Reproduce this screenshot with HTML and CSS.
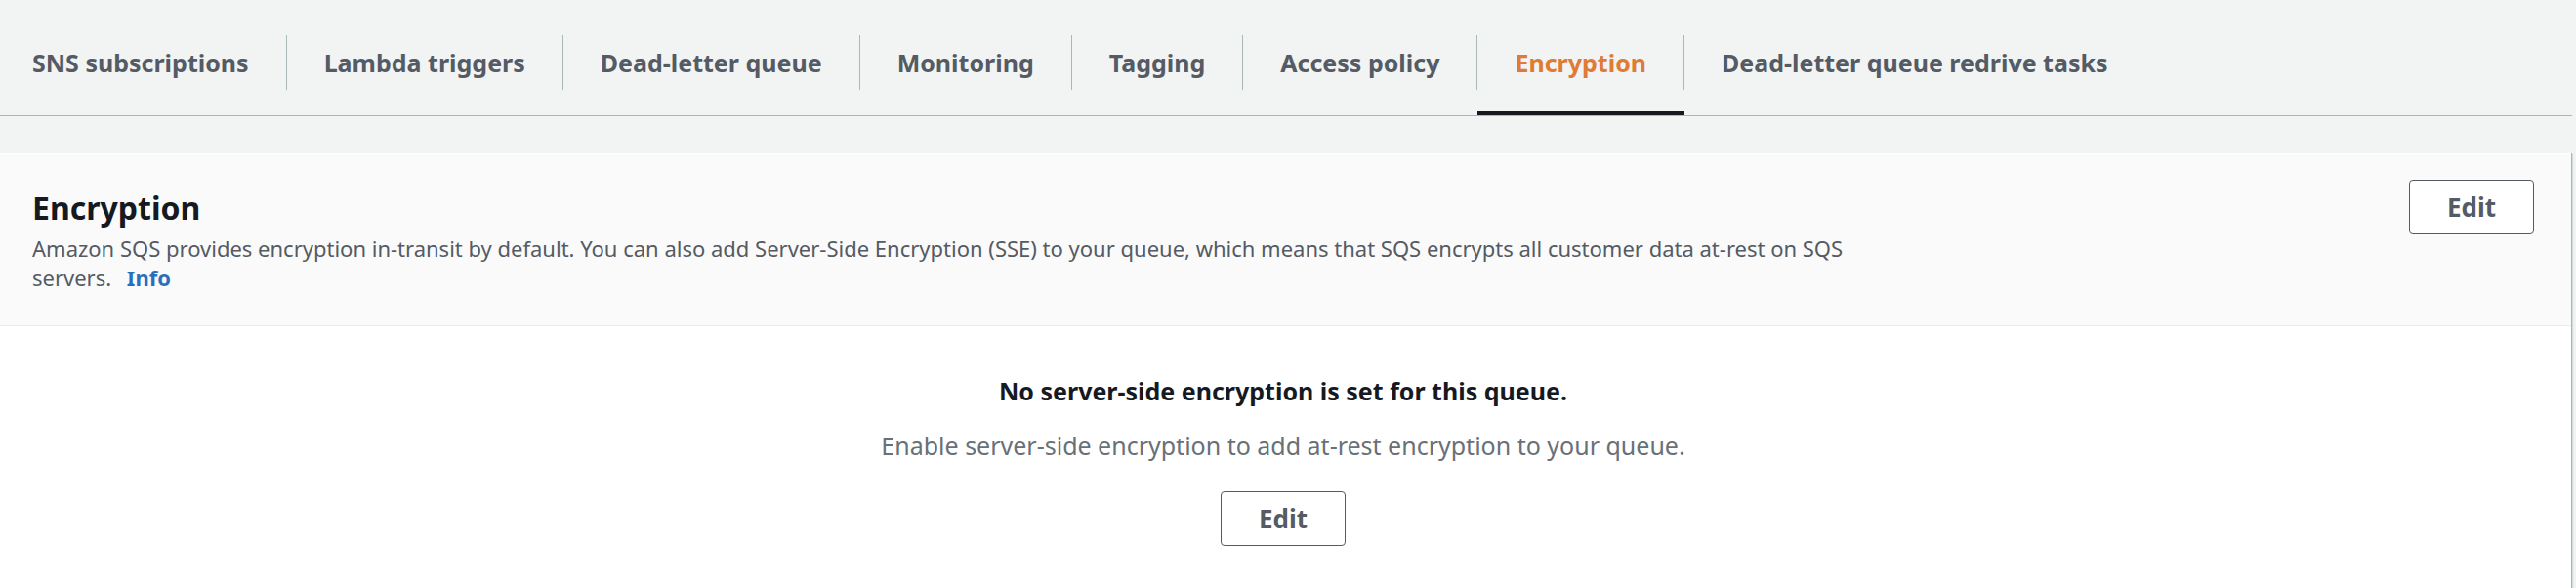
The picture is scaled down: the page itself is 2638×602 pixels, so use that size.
FILE: index.html
```html
<!DOCTYPE html>
<html lang="en">
<head>
<meta charset="utf-8">
<title>Encryption</title>
<link rel="stylesheet" href="styles.css">
</head>
<body>
<nav class="tabs" aria-label="Queue details">
  <ul class="tab-list">
    <li class="tab"><a class="tab-link" href="#sns">SNS subscriptions</a></li>
    <li class="tab"><a class="tab-link" href="#lambda">Lambda triggers</a></li>
    <li class="tab"><a class="tab-link" href="#dlq">Dead-letter queue</a></li>
    <li class="tab"><a class="tab-link" href="#monitoring">Monitoring</a></li>
    <li class="tab"><a class="tab-link" href="#tagging">Tagging</a></li>
    <li class="tab"><a class="tab-link" href="#policy">Access policy</a></li>
    <li class="tab tab-active"><a class="tab-link" href="#encryption" aria-current="page">Encryption</a></li>
    <li class="tab"><a class="tab-link" href="#redrive">Dead-letter queue redrive tasks</a></li>
  </ul>
</nav>
<main class="panel" id="encryption">
  <header class="panel-header">
    <div class="panel-intro">
      <h2 class="panel-title">Encryption</h2>
      <p class="panel-description">Amazon SQS provides encryption in-transit by default. You can also add Server-Side Encryption (SSE) to your queue, which means that SQS encrypts all customer data at-rest on SQS servers. <a class="info-link" href="#info">Info</a></p>
    </div>
    <button class="button" type="button">Edit</button>
  </header>
  <section class="empty-state">
    <h3 class="empty-title">No server-side encryption is set for this queue.</h3>
    <p class="empty-text">Enable server-side encryption to add at-rest encryption to your queue.</p>
    <button class="button" type="button">Edit</button>
  </section>
</main>
</body>
</html>
```
FILE: styles.css
```css
* {
  box-sizing: border-box;
}

body {
  display: flex;
  flex-direction: column;
  min-height: 100vh;
  margin: 0;
  padding-right: 4px;
  background: #f2f3f3;
  color: #16191f;
  font-family: "Noto Sans", "Open Sans", sans-serif;
}

h2,
h3,
p,
ul {
  margin: 0;
  padding: 0;
}

.tabs {
  margin-bottom: 38px;
  border-bottom: 1px solid #aab7b8;
}

.tab-list {
  display: flex;
  list-style: none;
}

.tab {
  padding: 36px 0 22px;
  border-bottom: 4px solid transparent;
}

.tab-link {
  display: block;
  padding: 0 38px;
  border-right: 1px solid #aab7b8;
  color: #545b64;
  font-size: 25px;
  font-weight: 700;
  line-height: 56px;
  text-decoration: none;
  white-space: nowrap;
}

.tab:first-child .tab-link {
  padding-left: 33px;
}

.tab:last-child .tab-link {
  border-right: 0;
}

.tab-active {
  border-bottom-color: #16191f;
}

.tab-active .tab-link {
  color: #e07b33;
}

.panel {
  flex: 1;
  border-right: 1px solid #aab7b8;
  background: #ffffff;
  box-shadow: 1px 1px 1px #d5dbdb;
}

.panel-header {
  display: flex;
  justify-content: space-between;
  align-items: flex-start;
  padding: 26px 38px 34px 33px;
  border-top: 1px solid #ffffff;
  border-bottom: 1px solid #eaeded;
  background: #fafafa;
}

.panel-intro {
  max-width: 1860px;
  padding-top: 7px;
}

.panel-title {
  margin-bottom: 4px;
  font-size: 32px;
  font-weight: 700;
  line-height: 44px;
}

.panel-description {
  color: #545b64;
  font-size: 22px;
  line-height: 30px;
}

.info-link {
  margin-left: 10px;
  color: #2a6fbb;
  font-weight: 700;
  text-decoration: none;
}

.button {
  padding: 0 38px;
  border: 1px solid #545b64;
  border-radius: 4px;
  background: #ffffff;
  color: #545b64;
  font-family: inherit;
  font-size: 26px;
  font-weight: 700;
  line-height: 54px;
}

.empty-state {
  display: flex;
  flex-direction: column;
  align-items: center;
  padding: 46px 38px 44px 33px;
  text-align: center;
}

.empty-title {
  margin-bottom: 16px;
  font-size: 25px;
  line-height: 40px;
}

.empty-text {
  margin-bottom: 27px;
  color: #687078;
  font-size: 25px;
  line-height: 40px;
}
```
